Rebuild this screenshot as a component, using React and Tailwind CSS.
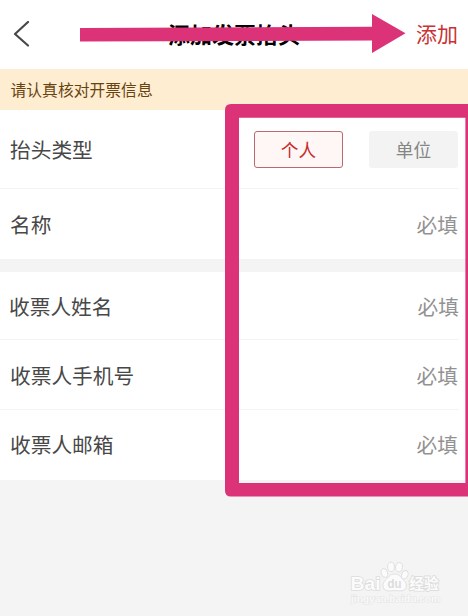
const Row = ({ label, height, inset = 'px-2.5', line = true, children }) => (
  <div className={`relative flex shrink-0 items-center justify-between ${inset} ${height} bg-white`}>
    <span className="text-[20.7px] leading-none text-[#484848]">{label}</span>
    {children || <span className="text-[20.7px] leading-none text-[#929292]">必填</span>}
    {line && <div className="absolute bottom-0 left-0 right-[9px] h-px bg-[#f4f4f4]" />}
  </div>
);

const Watermark = () => (
  <svg className="absolute left-[346px] top-[556px]" width="100" height="52" viewBox="0 0 100 52">
    <g fill="#fbfbfb" stroke="#dddddd" strokeWidth="0.9">
      <ellipse cx="38.4" cy="17" rx="3.2" ry="4.5" transform="rotate(-15 38.4 17)" />
      <ellipse cx="45" cy="10.8" rx="3.4" ry="4.7" />
      <ellipse cx="53" cy="11.2" rx="3.4" ry="4.7" transform="rotate(8 53 11.2)" />
      <ellipse cx="58.8" cy="18.7" rx="3.2" ry="4.3" transform="rotate(22 58.8 18.7)" />
      <path d="M48.5 18C43.5 18 42.5 21.5 39.5 24C35.8 27.5 36 34 41.5 34.8C44.5 35.2 46.5 34.6 48.8 34.6C51 34.6 53.5 35.2 56 34.8C61.5 34 61.5 27.5 58 24.5C54.5 21.5 54 18 48.5 18Z" />
      <text x="4.5" y="34" fontSize="18.5" fontWeight="bold" textLength="30" lengthAdjust="spacingAndGlyphs" fontFamily="Liberation Sans, sans-serif" paintOrder="stroke" strokeWidth="1.6">Bai</text>
      <text x="63.3" y="32.6" fontSize="15" fontWeight="bold" textLength="29.5" lengthAdjust="spacingAndGlyphs" fontFamily="'Noto Sans CJK SC', sans-serif" paintOrder="stroke" strokeWidth="1.8">经验</text>
      <text x="5" y="46.3" fontSize="9.5" fontWeight="bold" textLength="89" lengthAdjust="spacingAndGlyphs" fontFamily="Liberation Sans, sans-serif" paintOrder="stroke" stroke="#e6e6e6" strokeWidth="1.2" fill="#f9f9f9">jingyan.baidu.com</text>
    </g>
    <text x="41.5" y="31.8" fontSize="12.5" fontWeight="bold" textLength="14" lengthAdjust="spacingAndGlyphs" fontFamily="Liberation Sans, sans-serif" fill="#dcdcdc">du</text>
  </svg>
);

export default function App() {
  return (
    <div className="relative flex h-[616px] w-[468px] flex-col overflow-hidden bg-[#f4f4f4] font-['Noto_Sans_CJK_SC',sans-serif]">
      <header className="relative flex h-[69px] shrink-0 items-center justify-between bg-white pl-3 pr-2.5">
        <svg width="20" height="28" viewBox="0 0 20 28" fill="none" stroke="#484848" strokeWidth="2.2" strokeLinecap="round" strokeLinejoin="round" className="mb-[3px]">
          <path d="M16 3L3 15L16 26.5" />
        </svg>
        <h1 className="ml-5 pb-[3px] text-[22px] font-bold leading-none text-black">添加发票抬头</h1>
        <span className="pb-[3px] text-[21px] leading-none text-[#c83232]">添加</span>
        <svg className="absolute left-0 top-0" width="468" height="69" viewBox="0 0 468 69">
          <path d="M80 28L372 26.8V14L405.5 33.3L372 53V40.5L80 41.5Z" fill="#dc3278" />
        </svg>
      </header>
      <div className="flex h-[41px] shrink-0 items-center bg-[#feedd1] pl-[10.5px] text-[15.8px] leading-none text-[#68430f]">
        <span>请认真核对开票信息</span>
      </div>
      <Row label="抬头类型" height="h-[79px]">
        <div className="flex gap-[26px] text-[17.7px] leading-none">
          <button className="h-[37px] w-[89px] rounded-[3px] border border-[#b96a6e] bg-[#fff7f6] text-[#c72d2d]">个人</button>
          <button className="h-[37px] w-[89px] rounded-[3px] bg-[#f3f3f3] text-[#858585]">单位</button>
        </div>
      </Row>
      <Row label="名称" height="h-[70px]" line={false} />
      <div className="h-[13px] shrink-0" />
      <Row label="收票人姓名" height="h-[68px]" inset="px-[9px]" />
      <Row label="收票人手机号" height="h-[70px]" />
      <Row label="收票人邮箱" height="h-[69.5px]" line={false} />
      <div className="absolute left-[225px] top-[104px] h-[393px] w-[254px]">
        <svg width="254" height="393" viewBox="0 0 254 393">
          <path fill="#dc3278" fillRule="evenodd" d="M6 0H254V392.5H6Q0 392.5 0 386.5V6Q0 0 6 0ZM14 13.7V379H240.4V13.7Z" />
        </svg>
      </div>
      <Watermark />
    </div>
  );
}
